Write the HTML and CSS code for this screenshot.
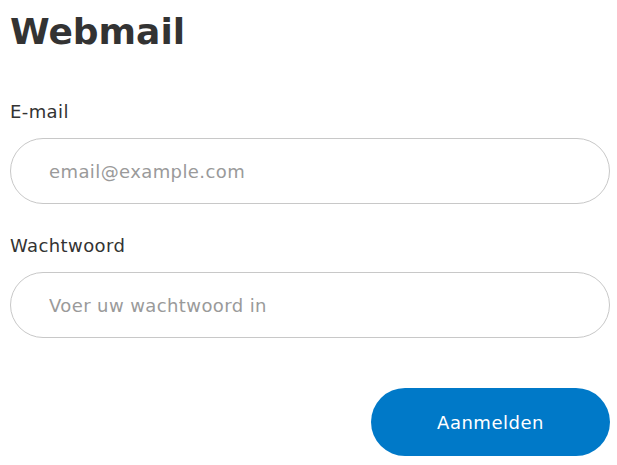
FILE: index.html
```html
<!DOCTYPE html>
<html lang="nl">
<head>
<meta charset="utf-8">
<title>Webmail</title>
<link rel="stylesheet" href="styles.css">
</head>
<body>
<main class="login">
  <h1 class="title">Webmail</h1>
  <form class="form">
    <div class="field">
      <label class="label" for="email">E-mail</label>
      <input class="input" id="email" type="email" placeholder="email@example.com">
    </div>
    <div class="field">
      <label class="label" for="pw">Wachtwoord</label>
      <input class="input" id="pw" type="password" placeholder="Voer uw wachtwoord in">
    </div>
    <div class="actions">
      <button class="button" type="button">Aanmelden</button>
    </div>
  </form>
</main>
</body>
</html>
```
FILE: styles.css
```css
html, body {
  margin: 0;
  padding: 0;
  background: #fff;
}
body {
  font-family: "DejaVu Sans", sans-serif;
  color: #333;
}
.login {
  padding: 0 7px 0 10px;
}
.title {
  margin: 0;
  padding-top: 8px;
  font-size: 36px;
  line-height: 48px;
  font-weight: 700;
  color: #333;
}
.form {
  display: flex;
  flex-direction: column;
  margin-top: 44px;
}
.field {
  display: flex;
  flex-direction: column;
  gap: 14px;
  margin-bottom: 30px;
}
.label {
  font-size: 18px;
  line-height: 24px;
  letter-spacing: 0.4px;
  color: #333;
}
.input {
  box-sizing: border-box;
  height: 66px;
  width: 100%;
  border: 1px solid #c8c8c8;
  border-radius: 33px;
  padding: 0 38px;
  font-family: inherit;
  font-size: 18px;
  letter-spacing: 0.4px;
  color: #333;
  background: #fff;
  outline: none;
}
.input::placeholder {
  color: #9a9a9a;
}
.actions {
  display: flex;
  justify-content: flex-end;
  margin-top: 20px;
}
.button {
  width: 239px;
  height: 68px;
  border: none;
  border-radius: 34px;
  background: #0079c8;
  color: #fff;
  font-family: inherit;
  font-size: 18px;
  letter-spacing: 0.5px;
  cursor: pointer;
}
```
